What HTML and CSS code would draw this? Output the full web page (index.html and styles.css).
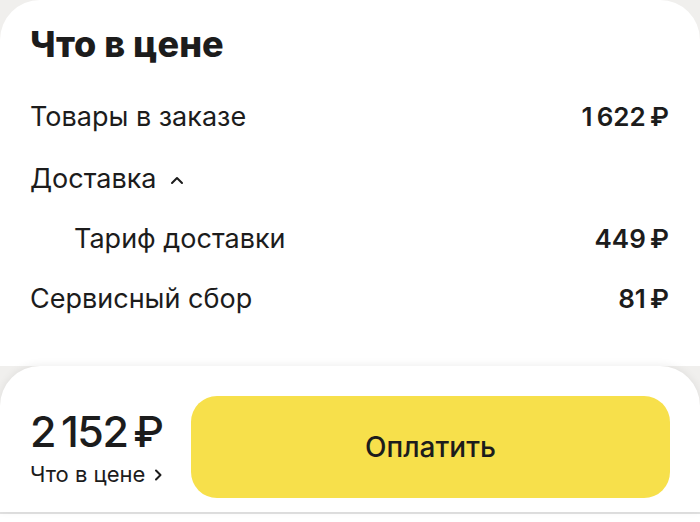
FILE: index.html
```html
<!DOCTYPE html>
<html lang="ru">
<head>
    <meta charset="UTF-8">
    <meta name="viewport" content="width=device-width, initial-scale=1.0">
    <title>Что в цене</title>
    <link rel="stylesheet" href="styles.css">
</head>
<body>

    <div class="page">
        <!-- детализация цены -->
        <div class="sheet">
            <h1 class="sheet-title">Что в цене</h1>
            <div class="price-row">
                <span class="price-label">Товары в заказе</span>
                <span class="price-value">1&#8239;622&#8201;₽</span>
            </div>
            <div class="price-row">
                <span class="price-label">Доставка
                    <svg class="chevron-up" width="18" height="10" viewBox="0 0 18 10"><path d="M4 8 L9 3 L14 8" fill="none" stroke="#1c1c1c" stroke-width="2" stroke-linecap="round" stroke-linejoin="round"/></svg>
                </span>
            </div>
            <div class="price-row sub-row">
                <span class="price-label">Тариф доставки</span>
                <span class="price-value">449&#8201;₽</span>
            </div>
            <div class="price-row">
                <span class="price-label">Сервисный сбор</span>
                <span class="price-value">81&#8201;₽</span>
            </div>
        </div>

        <!-- нижняя панель оплаты -->
        <div class="pay-bar">
            <div class="total">
                <div class="total-sum">2&#8201;152&#8201;₽</div>
                <div class="total-link">Что в цене
                    <svg width="10" height="14" viewBox="0 0 10 14"><path d="M3 2.5 L7.5 7 L3 11.5" fill="none" stroke="#1c1c1c" stroke-width="2" stroke-linecap="round" stroke-linejoin="round"/></svg>
                </div>
            </div>
            <button class="pay-button">Оплатить</button>
        </div>
        <div class="bottom-line"></div>
    </div>

</body>
</html>
```

FILE: styles.css
```css
body {
    margin: 0;
    background-color: #f0efed;
    font-family: Inter, "Noto Sans", sans-serif;
    color: #1c1c1c;
}

.page {
    width: 700px;
    height: 522px;
    display: flex;
    flex-direction: column;
    overflow: hidden;
}

/* карточка с детализацией */
.sheet {
    background: #fff;
    border-radius: 40px 40px 0 0;
    height: 367px;
    padding: 0 31px 0 30px;
    box-sizing: border-box;
}

.sheet-title {
    margin: 0 0 21px;
    padding-top: 24px;
    font-size: 36px;
    font-weight: 800;
    line-height: 40px;
}

.price-row {
    display: flex;
    justify-content: space-between;
    align-items: center;
    height: 62px;
    font-size: 27px;
}

.price-row.sub-row {
    height: 58px;
    padding-left: 44px;
}

.price-value {
    font-weight: 600;
    font-size: 26px;
}

.chevron-up {
    margin-left: 4px;
    vertical-align: middle;
}

/* нижняя панель */
.pay-bar {
    background: #fff;
    border-radius: 40px 40px 0 0;
    box-shadow: 0 -1px 8px rgba(0, 0, 0, 0.07);
    height: 147px;
    display: flex;
    align-items: center;
    padding: 0 30px;
    gap: 30px;
    position: relative;
}

.total {
    width: 131px;
    padding-top: 18px;
}

.total-sum {
    font-size: 43px;
    font-weight: 500;
    line-height: 46px;
    letter-spacing: -1.5px;
    white-space: nowrap;
}

.total-link {
    font-size: 22px;
    line-height: 26px;
    margin-top: 7px;
    white-space: nowrap;
}

.total-link svg {
    margin-left: 1px;
}

.pay-button {
    flex: 1;
    height: 102px;
    border: none;
    border-radius: 26px;
    background-color: #f7e04b;
    font-family: inherit;
    font-size: 28px;
    font-weight: 500;
    color: #1c1c1c;
    margin-top: 16px;
}

.bottom-line {
    height: 8px;
    background: #fff;
    border-top: 2px solid #e2e2e2;
}
```
